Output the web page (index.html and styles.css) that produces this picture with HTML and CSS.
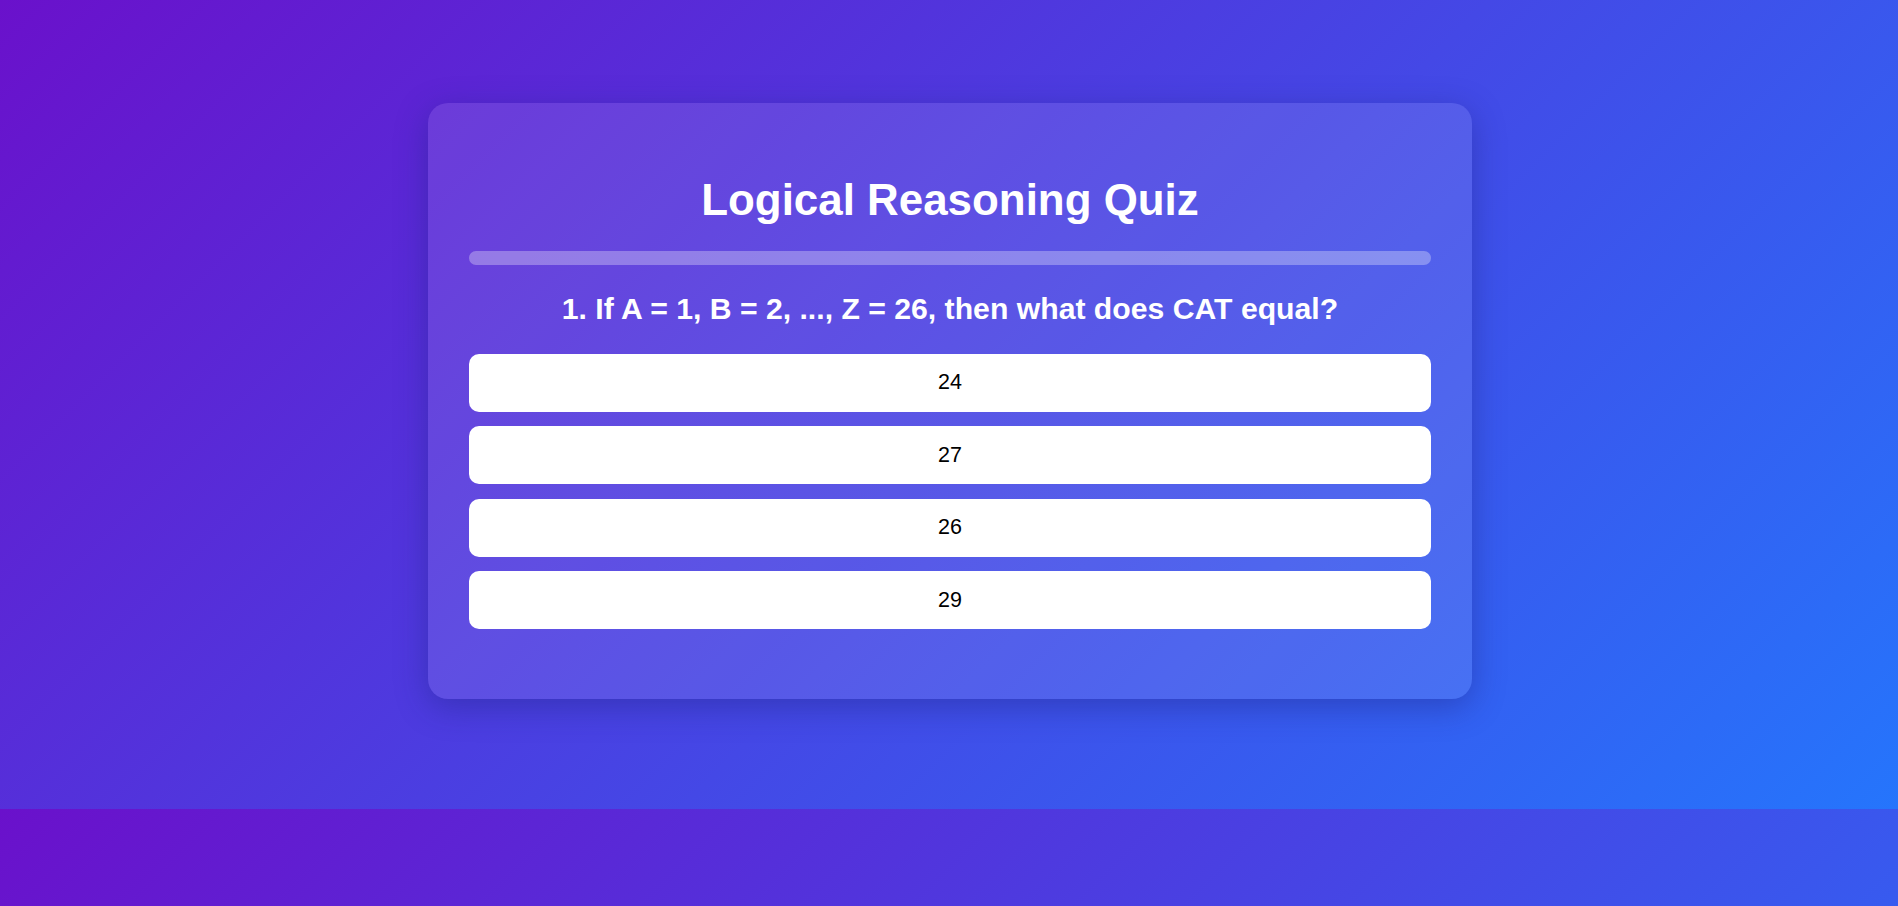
FILE: index.html
```html
<!DOCTYPE html>
<html lang="en">
<head>
<meta charset="utf-8">
<title>Logical Reasoning Quiz</title>
<link rel="stylesheet" href="styles.css">
</head>
<body>
<main class="page">
  <section class="card">
    <h1 class="title">Logical Reasoning Quiz</h1>
    <div class="progress"><div class="progress-fill"></div></div>
    <h2 class="question">1. If A = 1, B = 2, ..., Z = 26, then what does CAT equal?</h2>
    <div class="options">
      <button class="option">24</button>
      <button class="option">27</button>
      <button class="option">26</button>
      <button class="option">29</button>
    </div>
  </section>
</main>
</body>
</html>
```
FILE: styles.css
```css
body {
  margin: 0;
  font-family: "Liberation Sans", Arial, sans-serif;
  background: linear-gradient(135deg, #6a11cb 0%, #2575fc 100%);
  color: #fff;
}

.page {
  padding: 103px 0 110px 2px;
}

.card {
  box-sizing: border-box;
  width: 1044px;
  margin: 0 auto;
  padding: 72.4px 41px 69.5px;
  border-radius: 20px;
  background: rgba(255, 255, 255, 0.1);
  box-shadow: 0 8px 32px rgba(31, 38, 135, 0.45);
}

.title {
  margin: 0;
  font-size: 43.9px;
  font-weight: 700;
  line-height: normal;
  text-align: center;
  color: #fff;
}

.progress {
  height: 14px;
  margin-top: 26px;
  border-radius: 7px;
  background: rgba(255, 255, 255, 0.3);
  overflow: hidden;
}

.progress-fill {
  width: 0;
  height: 100%;
  background: #fff;
}

.question {
  margin: 26.3px 0 0;
  font-size: 30.2px;
  font-weight: 700;
  line-height: normal;
  text-align: center;
  color: #fff;
}

.options {
  display: flex;
  flex-direction: column;
  gap: 14.5px;
  margin-top: 28.3px;
}

.option {
  display: flex;
  align-items: center;
  justify-content: center;
  height: 58px;
  padding: 0;
  border: none;
  border-radius: 10px;
  background: #fff;
  color: #000;
  font-family: "Liberation Sans", Arial, sans-serif;
  font-size: 21.5px;
  cursor: pointer;
}
```
